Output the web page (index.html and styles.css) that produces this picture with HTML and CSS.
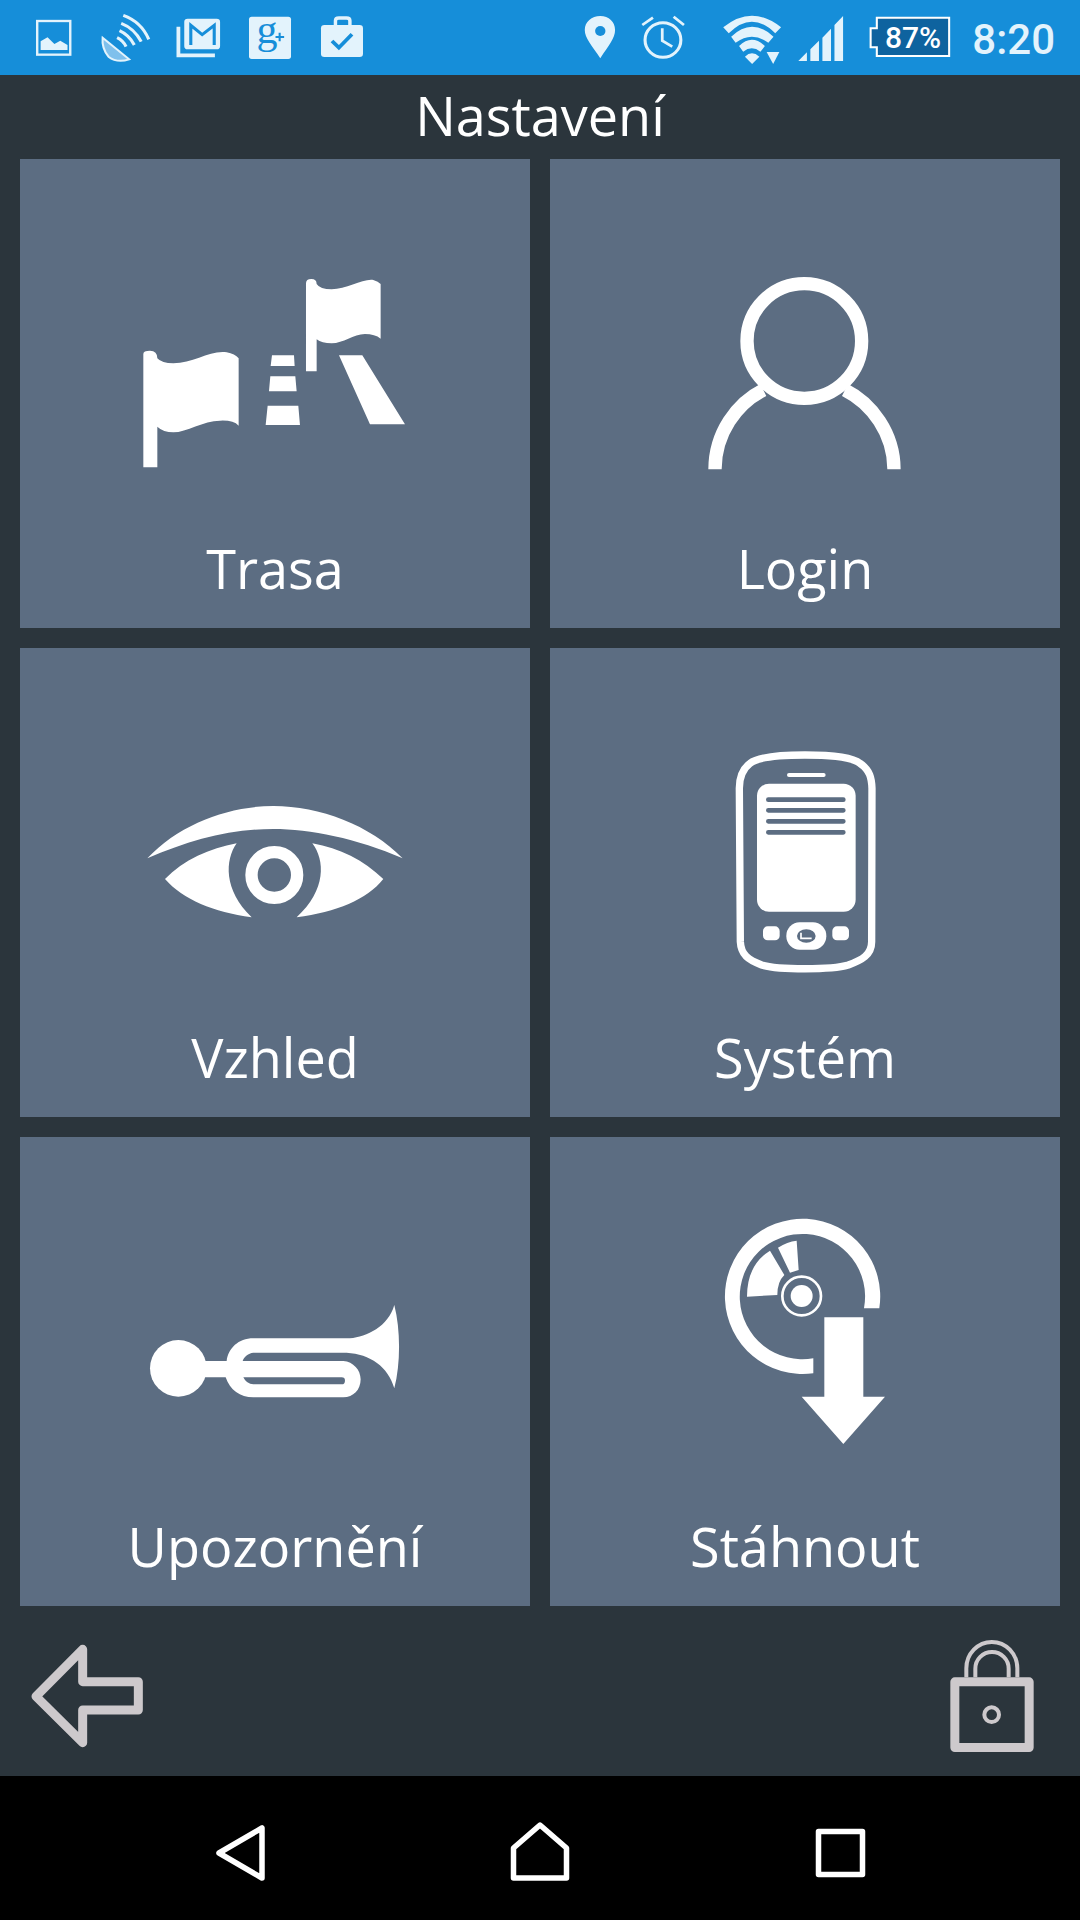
FILE: index.html
```html
<!DOCTYPE html>
<html lang="cs">
<head>
    <meta charset="UTF-8">
    <meta name="viewport" content="width=device-width, initial-scale=1.0">
    <title>Nastavení</title>
    <link rel="stylesheet" href="styles.css">
</head>
<body>
    <div class="screen">
        <div class="status-bar">
            <svg class="status-side" viewBox="0 0 540 75">
                <g class="status-icons" transform="scale(.3444 .3333)">
                    <!-- gallery -->
                    <rect x="108" y="63" width="96" height="101" class="line" stroke-width="7"/>
                    <path d="M118 150V124L138 112L158 132L175 122L196 135V150Z"/>
                    <!-- satellite -->
                    <path d="M298 113L375 178Q340 190 315 170Q295 145 298 113Z" class="dish"/>
                    <path d="M340 113Q358 122 366 140M347 92Q375 105 390 135M352 70Q390 85 410 125M358 46Q410 65 432 118" class="line" stroke-width="9"/>
                    <!-- gmail -->
                    <path d="M518 80V166H624" class="line" stroke-width="11"/>
                    <rect x="535" y="56" width="104" height="92" rx="10"/>
                    <path d="M554 135V76L587 104L622 76V135" class="line-blue" stroke-width="9"/>
                    <!-- google plus -->
                    <rect x="723" y="50" width="122" height="127" rx="8"/>
                    <text x="745" y="130" class="gplus">g</text>
                    <path d="M800 111H825M812 98V124" class="line-blue" stroke-width="6"/>
                    <!-- briefcase -->
                    <rect x="932" y="75" width="122" height="96" rx="10"/>
                    <path d="M974 78V62Q974 54 984 54H1006Q1016 54 1016 62V78" class="line" stroke-width="10"/>
                    <path d="M964 123L984 143L1022 103" class="line-blue" stroke-width="11"/>
                </g>
            </svg>
            <svg class="status-side" viewBox="0 0 540 75">
                <g class="status-icons" transform="scale(.3444 .3333)">
                    <!-- pin -->
                    <path d="M175 175C150 135 130 115 130 90C130 65 150 48 175 48C200 48 218 65 218 90C218 115 200 135 175 175Z"/>
                    <circle cx="175" cy="93" r="15" class="hole"/>
                    <!-- alarm -->
                    <ellipse cx="357" cy="120" rx="52" ry="52" class="line" stroke-width="9"/>
                    <path d="M355 85V122L384 140M297 75L328 53M388 50L418 75" class="line" stroke-width="8"/>
                    <!-- wifi -->
                    <path d="M532 82Q615 12 700 82L683 100Q615 30 548 100Z"/>
                    <path d="M555 110Q615 50 678 110L663 128Q615 92 568 128Z"/>
                    <path d="M578 138Q615 100 653 138L640 155Q615 135 590 155Z"/>
                    <path d="M595 170Q615 150 637 170L616 192Z"/>
                    <path d="M658 156H695L677 192Z"/>
                    <!-- signal -->
                    <path d="M750 183L775 157V183ZM785 183V148L810 122V183ZM820 183V113L845 86V183ZM855 183V75L880 48V183Z"/>
                    <!-- battery -->
                    <path d="M978 53H1188V168H978V142H960V85H978Z" class="battery"/>
                </g>
                <text x="373" y="48" text-anchor="middle" class="battery-text">87%</text>
                <text x="515" y="54" text-anchor="end" class="clock">8:20</text>
            </svg>
        </div>

        <h1 class="title">Nastavení</h1>

        <div class="tiles">
            <div class="tile">
                <svg class="tile-icon" viewBox="0 0 510 370">
                    <g transform="translate(100 101) scale(.3333)">
                        <path d="M70 622V282Q70 272 90 272Q112 272 112 295Q125 310 160 310C220 310 270 270 320 277Q345 282 356 295V497Q340 480 300 482C250 482 200 517 160 517Q130 517 112 500V622Z"/>
                        <path d="M558 334V70Q558 57 574 57Q590 57 590 72Q600 88 635 88C680 88 730 55 760 60Q775 65 782 72V236Q765 222 735 222C700 222 670 250 635 250Q605 250 590 238V334Z"/>
                        <path d="M456 286H522L524 318H452ZM451 349H526L530 394H447ZM443 437H535L540 495H437ZM657 286H727L855 493H750Z"/>
                    </g>
                </svg>
                <div class="tile-label">Trasa</div>
            </div>
            <div class="tile">
                <svg class="tile-icon" viewBox="0 0 510 370">
                    <g transform="translate(140 101) scale(.3333)" fill="none" stroke="#fff" stroke-width="40">
                        <circle cx="343" cy="243" r="172"/>
                        <path d="M75 628C75 520 140 430 220 390M612 628C612 520 545 430 465 390"/>
                    </g>
                </svg>
                <div class="tile-label">Login</div>
            </div>
            <div class="tile">
                <svg class="tile-icon" viewBox="0 0 510 370">
                    <g transform="translate(110 132) scale(.3333)">
                        <path d="M52 235C150 130 300 78 430 78C570 78 720 135 818 235C680 175 540 147 430 147C300 147 180 180 52 235Z"/>
                        <path d="M105 297C160 240 240 205 320 190C285 240 280 330 365 412C250 395 160 360 105 297Z"/>
                        <path d="M760 297C700 240 630 205 547 190C585 240 590 330 500 412C620 395 710 360 760 297Z"/>
                        <circle cx="433" cy="285" r="68.5" fill="none" stroke="#fff" stroke-width="37"/>
                    </g>
                </svg>
                <div class="tile-label">Vzhled</div>
            </div>
            <div class="tile">
                <svg class="tile-icon" viewBox="0 0 510 370">
                    <g transform="translate(165 87) scale(.3333)">
                        <path d="M270 60C350 60 410 65 435 85C465 105 470 130 471 160L470 620C470 660 440 675 400 690C350 705 190 705 140 690C100 675 78 660 76 620L73 160C73 120 85 100 105 85C130 65 190 60 270 60Z" fill="none" stroke="#fff" stroke-width="22"/>
                        <rect x="216" y="114" width="116" height="12" rx="6"/>
                        <rect x="126" y="146" width="296" height="384" rx="36"/>
                        <path d="M160 194H385M160 226H385M160 259H385M160 292H385" fill="none" stroke="#5c6d82" stroke-width="14" stroke-linecap="round"/>
                        <rect x="144" y="574" width="50" height="42" rx="14"/>
                        <rect x="352" y="574" width="50" height="42" rx="14"/>
                        <rect x="214" y="562" width="120" height="82" rx="40"/>
                        <ellipse cx="274" cy="603" rx="28" ry="20" fill="#5c6d82"/>
                        <path d="M258 593V610H290" fill="none" stroke="#fff" stroke-width="5"/>
                    </g>
                </svg>
                <div class="tile-label">Systém</div>
            </div>
            <div class="tile">
                <svg class="tile-icon" viewBox="0 0 510 370">
                    <g transform="translate(110 153) scale(.3333)">
                        <circle cx="145" cy="235" r="85"/>
                        <path fill-rule="evenodd" d="M225 213H290C295 175 325 145 370 145H660C710 140 775 110 793 45C812 120 812 220 793 295C775 230 720 192 650 188H370C355 190 342 200 338 213H640C670 215 692 240 692 268C692 300 670 322 640 322H370C330 322 300 300 287 262H225ZM340 262H635Q645 262 645 272Q645 283 635 283H370Q350 283 340 262Z"/>
                    </g>
                </svg>
                <div class="tile-label">Upozornění</div>
            </div>
            <div class="tile">
                <svg class="tile-icon" viewBox="0 0 510 370">
                    <g transform="translate(150 63) scale(.3333)">
                        <path d="M538 325A233 233 0 1 0 340 520V475A188 188 0 1 1 492 325Z"/>
                        <path d="M210 152L253 225Q232 245 232 285L141 290Q141 195 210 152ZM234 143Q262 125 290 122L296 210L270 218Z"/>
                        <circle cx="305" cy="288" r="58" fill="none" stroke="#fff" stroke-width="8"/>
                        <circle cx="305" cy="288" r="33"/>
                        <path d="M373 352H490V590H555L430 732L305 590H373Z"/>
                    </g>
                </svg>
                <div class="tile-label">Stáhnout</div>
            </div>
        </div>

        <div class="toolbar">
            <svg class="tool-back" viewBox="0 18 600 510">
                <path d="M248 148L108 289L248 428V330H415V245H248Z" class="tool-line"/>
            </svg>
            <svg class="tool-lock" viewBox="0 -42 480 510">
                <rect x="104.5" y="185.5" width="223" height="197" class="tool-line"/>
                <circle cx="215" cy="284" r="22" class="tool-thin"/>
                <path d="M139 172V145A76.5 79 0 0 1 292 145V172M166 172V146A50 50 0 0 1 266 146V172" class="tool-thin"/>
            </svg>
        </div>

        <div class="nav-bar">
            <svg class="nav-icon" viewBox="0 0 64 64">
                <path d="M54 7V57L11 32Z"/>
            </svg>
            <svg class="nav-icon" viewBox="0 0 64 64">
                <path d="M32 4L58.5 27V57H5.5V27Z"/>
            </svg>
            <svg class="nav-icon" viewBox="0 0 64 64">
                <rect x="10.5" y="10.5" width="44" height="43"/>
            </svg>
        </div>
    </div>
</body>
</html>
```

FILE: styles.css
```css
body {
    margin: 0;
    padding: 0;
    background-color: #2b353c;
    font-family: "Open Sans", Arial, sans-serif;
}

.screen {
    width: 1080px;
    height: 1920px;
    display: flex;
    flex-direction: column;
    overflow: hidden;
}

/* status bar */
.status-bar {
    height: 75px;
    display: flex;
    background-color: #168ed9;
}

.status-side {
    width: 540px;
    height: 75px;
}

.status-icons {
    fill: #e3f3fc;
}

.status-icons .line {
    fill: none;
    stroke: #e3f3fc;
}

.status-icons .line-blue {
    fill: none;
    stroke: #168ed9;
}

.status-icons .hole {
    fill: #168ed9;
}

.status-icons .dish {
    fill: #7fc0ec;
    stroke: #e3f3fc;
    stroke-width: 6;
}

.status-icons .battery {
    fill: #0e639f;
    stroke: #fff;
    stroke-width: 6;
}

.gplus {
    fill: #168ed9;
    font-family: "Liberation Serif", serif;
    font-size: 122px;
}

.battery-text {
    fill: #fff;
    font-family: Roboto, sans-serif;
    font-weight: 500;
    font-size: 30px;
}

.clock {
    fill: #e3f3fc;
    font-family: Roboto, sans-serif;
    font-weight: 500;
    font-size: 42px;
}

/* title */
.title {
    height: 81px;
    margin: 0;
    padding-bottom: 3px;
    color: #fff;
    font-size: 54px;
    font-weight: 400;
    line-height: 81px;
    text-align: center;
}

/* tiles */
.tiles {
    display: grid;
    grid-template-columns: 510px 510px;
    grid-auto-rows: 469px;
    gap: 20px;
    padding: 0 20px;
}

.tile {
    background-color: #5c6d82;
}

.tile-icon {
    display: block;
    width: 510px;
    height: 370px;
    fill: #fff;
}

.tile-label {
    color: #fff;
    font-size: 54px;
    line-height: 78px;
    text-align: center;
}

/* bottom tools */
.toolbar {
    height: 170px;
    display: flex;
    justify-content: space-between;
}

.tool-back {
    width: 200px;
    height: 170px;
}

.tool-lock {
    width: 160px;
    height: 170px;
}

.tool-line {
    fill: none;
    stroke: #cdc9cc;
    stroke-width: 27;
    stroke-linejoin: round;
}

.tool-thin {
    fill: none;
    stroke: #cdc9cc;
    stroke-width: 12;
}

/* android buttons */
.nav-bar {
    height: 134px;
    padding-top: 10px;
    display: grid;
    grid-template-columns: repeat(3, 300px);
    justify-content: center;
    justify-items: center;
    align-items: center;
    background-color: #000;
}

.nav-icon {
    width: 64px;
    height: 64px;
    fill: none;
    stroke: #fff;
    stroke-width: 5.5;
    stroke-linejoin: round;
}
```
